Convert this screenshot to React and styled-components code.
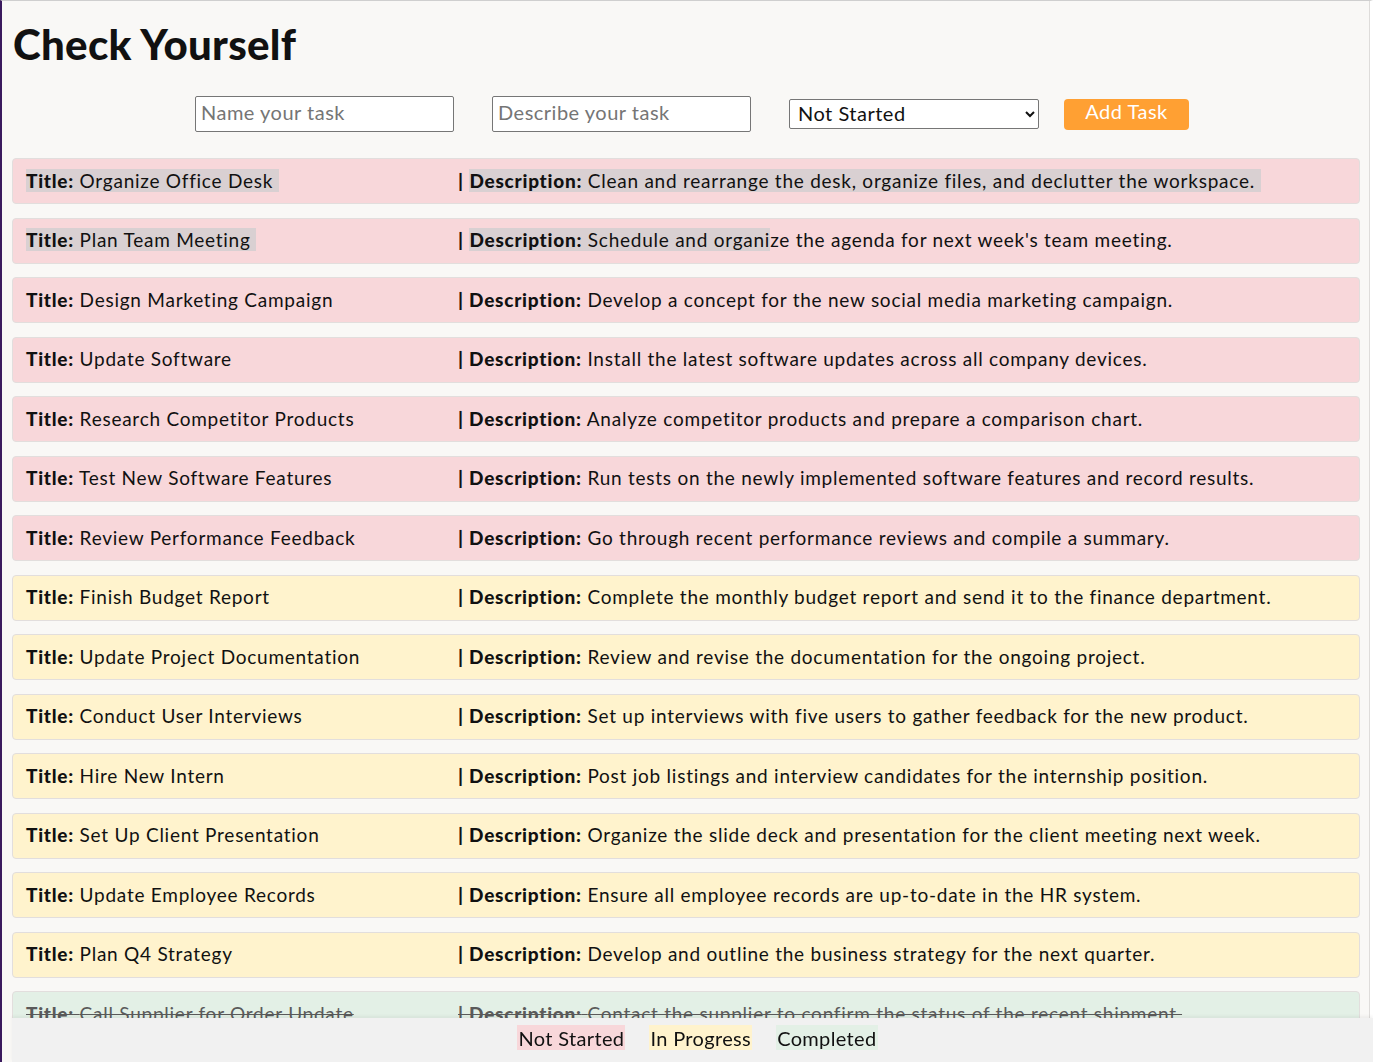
import styled, { createGlobalStyle } from 'styled-components';
import { useState } from 'react';

const GlobalStyle = createGlobalStyle`
    html, body {
        margin: 0;
        padding: 0;
        background: #f9f8f6;
        font-family: "Lato", "Noto Sans", sans-serif;
        color: #111;
    }
`

const Window = styled.div`
    min-height: 1062px;
    box-sizing: border-box;
    border-left: 2px solid #3a1a5e;
    border-top: 1px solid #cfcfcf;
    border-right: 3px solid #ffffff;
    box-shadow: inset -1px 0 0 #dedcda;
    padding: 0 10px 60px 10px;
`
const Heading = styled.h1`
    margin: 0;
    padding: 17px 0 0 1px;
    font-size: 42px;
    font-weight: 900;
    line-height: 52px;
    letter-spacing: 0.3px;
`
const FormRow = styled.form`
    display: flex;
    align-items: center;
    justify-content: center;
    gap: 38px;
    margin: 26px 0 26px 12px;
`
const TextInput = styled.input`
    width: 259px;
    height: 36px;
    box-sizing: border-box;
    border: 1px solid #767676;
    border-radius: 2px;
    padding: 0 5px 5px;
    font-family: inherit;
    font-size: 20px;
    letter-spacing: 0.5px;
    background: #fff;
    &::placeholder { color: #757575; }
`
const Select = styled.select`
    width: 250px;
    height: 30px;
    box-sizing: border-box;
    border: 1px solid #767676;
    border-radius: 2px;
    padding: 0 4px 5px;
    font-family: inherit;
    font-size: 20px;
    letter-spacing: 0.5px;
    color: #111;
    background: #fff;
`
const AddButton = styled.button`
    margin-left: -13px;
    width: 125px;
    height: 31px;
    border: none;
    border-radius: 4px;
    background: #ffa033;
    color: #fff;
    font-family: inherit;
    font-size: 20px;
    letter-spacing: 0.5px;
    padding: 0 0 6px;
`
const List = styled.div`
    display: flex;
    flex-direction: column;
    gap: 13.5px;
`
const colors = {
    notStarted: '#f8d7da',
    inProgress: '#fff3cd',
    completed: '#e3f0e6',
}
const Row = styled.div`
    display: flex;
    align-items: center;
    height: 46px;
    box-sizing: border-box;
    border: 1px solid #e2dedd;
    border-radius: 4px;
    padding: 0 13px 2px;
    background: ${p => colors[p.status]};
    font-size: 19px;
    letter-spacing: 0.75px;
    white-space: nowrap;
    ${p => p.status === 'completed' && `
        color: #5a5a5a;
        text-decoration: line-through;
    `}
`
const TitleCell = styled.div`
    width: 432px;
    flex: none;
`
const DescCell = styled.div``
const Label = styled.b`
    font-weight: 900;
`
const Sel = styled.span`
    background: #d9d0d2;
`
const Footer = styled.div`
    position: fixed;
    left: 12px;
    right: 0;
    bottom: 0;
    height: 44px;
    box-sizing: border-box;
    background: #f1f1f1;
    box-shadow: 0 -2px 3px rgba(0, 0, 0, 0.05);
    display: flex;
    justify-content: center;
    align-items: center;
    gap: 24px;
    padding: 0 0 5px 10px;
`
const Legend = styled.span`
    background: ${p => colors[p.status]};
    font-size: 20px;
    letter-spacing: 0.35px;
    padding: 1px 1px 0;
`

const tasks = [
    ['Organize Office Desk', 'Clean and rearrange the desk, organize files, and declutter the workspace.', 'notStarted'],
    ['Plan Team Meeting', "Schedule and organize the agenda for next week's team meeting.", 'notStarted'],
    ['Design Marketing Campaign', 'Develop a concept for the new social media marketing campaign.', 'notStarted'],
    ['Update Software', 'Install the latest software updates across all company devices.', 'notStarted'],
    ['Research Competitor Products', 'Analyze competitor products and prepare a comparison chart.', 'notStarted'],
    ['Test New Software Features', 'Run tests on the newly implemented software features and record results.', 'notStarted'],
    ['Review Performance Feedback', 'Go through recent performance reviews and compile a summary.', 'notStarted'],
    ['Finish Budget Report', 'Complete the monthly budget report and send it to the finance department.', 'inProgress'],
    ['Update Project Documentation', 'Review and revise the documentation for the ongoing project.', 'inProgress'],
    ['Conduct User Interviews', 'Set up interviews with five users to gather feedback for the new product.', 'inProgress'],
    ['Hire New Intern', 'Post job listings and interview candidates for the internship position.', 'inProgress'],
    ['Set Up Client Presentation', 'Organize the slide deck and presentation for the client meeting next week.', 'inProgress'],
    ['Update Employee Records', 'Ensure all employee records are up-to-date in the HR system.', 'inProgress'],
    ['Plan Q4 Strategy', 'Develop and outline the business strategy for the next quarter.', 'inProgress'],
    ['Call Supplier for Order Update', 'Contact the supplier to confirm the status of the recent shipment.', 'completed'],
]

const TaskRow = ({ title, desc, status, index }) => {
    // first two rows carry the text selection seen in the screenshot
    if (index === 0) {
        return (
            <Row status={status}>
                <TitleCell><Sel><Label>Title:</Label> {title}&nbsp;</Sel></TitleCell>
                <DescCell><Label>|</Label> <Sel><Label>Description:</Label> {desc}&nbsp;</Sel></DescCell>
            </Row>
        )
    }
    if (index === 1) {
        return (
            <Row status={status}>
                <TitleCell><Sel><Label>Title:</Label> {title}&nbsp;</Sel></TitleCell>
                <DescCell><Label>|</Label> <Sel><Label>Description:</Label> {desc.slice(0, 19)}</Sel>{desc.slice(19)}</DescCell>
            </Row>
        )
    }
    return (
        <Row status={status}>
            <TitleCell><Label>Title:</Label> {title}</TitleCell>
            <DescCell><Label>| Description:</Label> {desc}</DescCell>
        </Row>
    )
}

const App = () => {
    const [info, setInfo] = useState({ title: '', desc: '', status: 'notStarted' })

    const handleChange = e => {
        setInfo(prev => ({ ...prev, [e.target.id]: e.target.value }))
    }

    return (
        <Window>
            <GlobalStyle />
            <Heading>Check Yourself</Heading>
            <FormRow onSubmit={e => e.preventDefault()}>
                <TextInput id='title' placeholder='Name your task' value={info.title} onChange={handleChange} />
                <TextInput id='desc' placeholder='Describe your task' value={info.desc} onChange={handleChange} />
                <Select id='status' value={info.status} onChange={handleChange}>
                    <option value='notStarted'>Not Started</option>
                    <option value='inProgress'>In Progress</option>
                    <option value='completed'>Completed</option>
                </Select>
                <AddButton type='submit'>Add Task</AddButton>
            </FormRow>
            <List>
                {tasks.map(([title, desc, status], i) => (
                    <TaskRow key={title} title={title} desc={desc} status={status} index={i} />
                ))}
            </List>
            <Footer>
                <Legend status='notStarted'>Not Started</Legend>
                <Legend status='inProgress'>In Progress</Legend>
                <Legend status='completed'>Completed</Legend>
            </Footer>
        </Window>
    )
}

export default App;
